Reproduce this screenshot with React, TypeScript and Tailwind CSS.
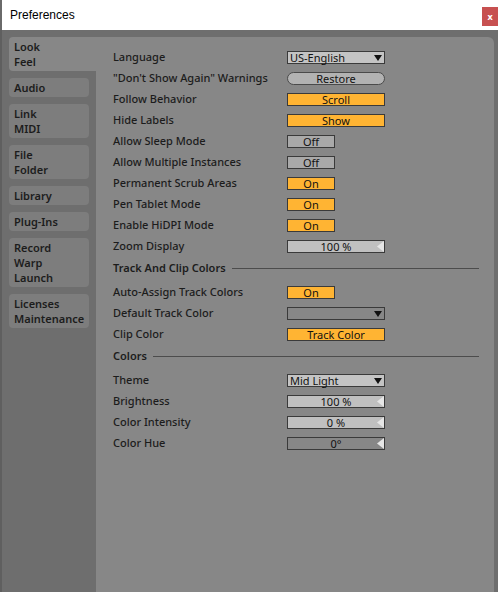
import React from "react";

type Ctrl =
  | { kind: "dropdown"; text: string; bg?: string }
  | { kind: "pill"; text: string }
  | { kind: "on"; text: string; wide?: boolean }
  | { kind: "off"; text: string }
  | { kind: "slider"; text: string; dark?: boolean };

type Row = { label: string; ctrl: Ctrl };

const general: Row[] = [
  { label: "Language", ctrl: { kind: "dropdown", text: "US-English" } },
  { label: "\"Don't Show Again\" Warnings", ctrl: { kind: "pill", text: "Restore" } },
  { label: "Follow Behavior", ctrl: { kind: "on", text: "Scroll", wide: true } },
  { label: "Hide Labels", ctrl: { kind: "on", text: "Show", wide: true } },
  { label: "Allow Sleep Mode", ctrl: { kind: "off", text: "Off" } },
  { label: "Allow Multiple Instances", ctrl: { kind: "off", text: "Off" } },
  { label: "Permanent Scrub Areas", ctrl: { kind: "on", text: "On" } },
  { label: "Pen Tablet Mode", ctrl: { kind: "on", text: "On" } },
  { label: "Enable HiDPI Mode", ctrl: { kind: "on", text: "On" } },
  { label: "Zoom Display", ctrl: { kind: "slider", text: "100 %" } },
];

const track: Row[] = [
  { label: "Auto-Assign Track Colors", ctrl: { kind: "on", text: "On" } },
  { label: "Default Track Color", ctrl: { kind: "dropdown", text: "", bg: "grey" } },
  { label: "Clip Color", ctrl: { kind: "on", text: "Track Color", wide: true } },
];

const colors: Row[] = [
  { label: "Theme", ctrl: { kind: "dropdown", text: "Mid Light" } },
  { label: "Brightness", ctrl: { kind: "slider", text: "100 %" } },
  { label: "Color Intensity", ctrl: { kind: "slider", text: "0 %" } },
  { label: "Color Hue", ctrl: { kind: "slider", text: "0°", dark: true } },
];

function Arrow() {
  return (
    <svg width="8" height="6" viewBox="0 0 8 6" className="shrink-0">
      <polygon points="0,0 8,0 4,6" fill="#111" />
    </svg>
  );
}

function SliderTri() {
  return (
    <svg width="7" height="11" viewBox="0 0 7 11" className="absolute right-0 top-0">
      <polygon points="7,0 7,11 0,5.5" fill="#e6e6e6" />
    </svg>
  );
}

function Control({ c }: { c: Ctrl }) {
  const base = "h-[13px] border border-[#3a3a3a] flex items-center text-[11px] leading-none text-[#111]";
  if (c.kind === "dropdown") {
    return (
      <div
        className={`${base} w-[98px] justify-between pl-[2px] pr-[2px] ${
          c.bg === "grey" ? "bg-[#878787]" : "bg-[#c4c4c4]"
        }`}
      >
        <span>{c.text}</span>
        <Arrow />
      </div>
    );
  }
  if (c.kind === "pill") {
    return (
      <div className={`${base} w-[98px] h-[12px] justify-center rounded-full bg-[#b2b2b2] border-[#4a4a4a]`}>
        {c.text}
      </div>
    );
  }
  if (c.kind === "on") {
    return (
      <div className={`${base} ${c.wide ? "w-[98px]" : "w-[48px]"} justify-center bg-[#ffb433]`}>{c.text}</div>
    );
  }
  if (c.kind === "off") {
    return <div className={`${base} w-[48px] justify-center bg-[#a9a9a9]`}>{c.text}</div>;
  }
  return (
    <div
      className={`${base} relative w-[98px] justify-center ${c.dark ? "bg-[#878787]" : "bg-[#c0c0c0]"}`}
    >
      <span>{c.text}</span>
      <SliderTri />
    </div>
  );
}

function RowView({ r }: { r: Row }) {
  return (
    <div className="h-[21px] flex items-center">
      <div className="w-[174px] shrink-0 text-[11px] text-[#1c1c1c] font-medium whitespace-nowrap">{r.label}</div>
      <Control c={r.ctrl} />
    </div>
  );
}

function Section({ title }: { title: string }) {
  return (
    <div className="h-[25px] flex items-start">
      <div className="h-[22px] flex items-center w-full gap-[6px]">
        <span className="text-[11px] font-semibold text-[#1c1c1c] whitespace-nowrap">{title}</span>
        <div className="flex-1 h-px bg-[#4c4c4c]" />
      </div>
    </div>
  );
}

function Tab({ lines, active }: { lines: string[]; active?: boolean }) {
  return (
    <div
      className={`py-[2px] pl-[5px] text-[11px] font-semibold text-[#1c1c1c] leading-[15px] ${
        active ? "w-[87px] bg-[#878787] rounded-l-[4px]" : "w-[80px] bg-[#7d7d7d] rounded-[4px]"
      }`}
    >
      {lines.map((l) => (
        <div key={l}>{l}</div>
      ))}
    </div>
  );
}

export default function App() {
  return (
    <div
      className="w-[498px] h-[592px] flex bg-[#6e6e6e] overflow-hidden"
      style={{ fontFamily: '"Noto Sans", "Open Sans", sans-serif' }}
    >
      <div className="w-[2px] shrink-0 bg-[#5f5f5f] flex flex-col">
        <div className="h-[30px] bg-[#6a6a6a]" />
      </div>
      <div className="flex-1 flex flex-col">
        <div className="h-[30px] bg-white flex items-center justify-between shrink-0">
          <span
            className="pl-[8px] text-[12px] text-black"
            style={{ fontFamily: '"Liberation Sans", Arial, sans-serif' }}
          >
            Preferences
          </span>
          <div className="w-[16px] h-[19px] mt-[3px] bg-[#c75050] flex items-center justify-center text-white text-[9px] font-bold leading-none">
            x
          </div>
        </div>
        <div className="flex-1 flex pt-[7px]">
          <div className="w-[94px] shrink-0 flex flex-col gap-[7px] pl-[7px]">
            <Tab lines={["Look", "Feel"]} active />
            <Tab lines={["Audio"]} />
            <Tab lines={["Link", "MIDI"]} />
            <Tab lines={["File", "Folder"]} />
            <Tab lines={["Library"]} />
            <Tab lines={["Plug-Ins"]} />
            <Tab lines={["Record", "Warp", "Launch"]} />
            <Tab lines={["Licenses", "Maintenance"]} />
          </div>
          <div className="flex-1 mr-[4px] bg-[#878787] rounded-tr-[6px] pt-[10px] pl-[17px] pr-[15px]">
            {general.map((r) => (
              <RowView key={r.label} r={r} />
            ))}
            <Section title="Track And Clip Colors" />
            {track.map((r) => (
              <RowView key={r.label} r={r} />
            ))}
            <Section title="Colors" />
            {colors.map((r) => (
              <RowView key={r.label} r={r} />
            ))}
          </div>
        </div>
      </div>
    </div>
  );
}
